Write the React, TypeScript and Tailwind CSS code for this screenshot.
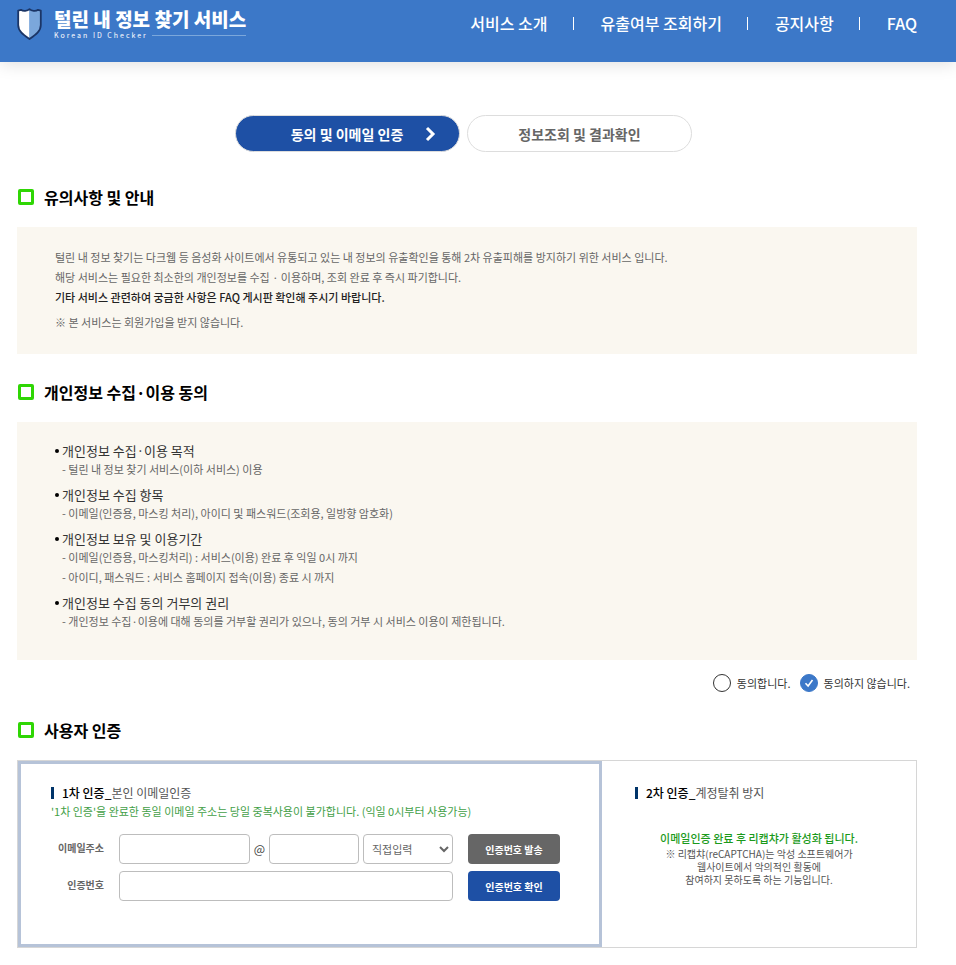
import { useState } from "react";
import type { ReactNode } from "react";

const NAV_ITEMS = ["서비스 소개", "유출여부 조회하기", "공지사항", "FAQ"];

const TERMS = [
  { title: "개인정보 수집·이용 목적", lines: ["- 털린 내 정보 찾기 서비스(이하 서비스) 이용"] },
  {
    title: "개인정보 수집 항목",
    lines: ["- 이메일(인증용, 마스킹 처리), 아이디 및 패스워드(조회용, 일방향 암호화)"],
  },
  {
    title: "개인정보 보유 및 이용기간",
    lines: [
      "- 이메일(인증용, 마스킹처리) : 서비스(이용) 완료 후 익일 0시 까지",
      "- 아이디, 패스워드 : 서비스 홈페이지 접속(이용) 종료 시 까지",
    ],
  },
  {
    title: "개인정보 수집 동의 거부의 권리",
    lines: [
      "- 개인정보 수집·이용에 대해 동의를 거부할 권리가 있으나, 동의 거부 시 서비스 이용이 제한됩니다.",
    ],
  },
];

const FIELD = "h-[30px] min-w-0 rounded border border-[#bdbdbd] bg-white text-[11px] text-[#666]";

function ShieldLogo() {
  return (
    <svg className="h-8 w-[25px] shrink-0" viewBox="0 0 25 32" aria-hidden="true">
      <path d="M12.500 1.500C10.500 3.200 6 3.400 4 1.800L1.200 3.600V17c0 6.500 5.500 10 11.300 14z" fill="#fff" />
      <path d="M12.500 1.500C14.500 3.200 19 3.400 21 1.800l2.800 1.800V17c0 6.500-5.500 10-11.300 14z" fill="#7ba7db" />
      <path
        d="M12.500 1.200C10.500 3.200 6 3.400 4 1.800L1.200 2.600V17c0 6.500 5.500 10 11.300 14 5.800-4 11.300-7.500 11.300-14V2.600L21 1.800C19 3.400 14.500 3.200 12.500 1.200z"
        fill="none"
        stroke="#1b3566"
        strokeWidth="1.800"
        strokeLinejoin="round"
      />
    </svg>
  );
}

function Header() {
  return (
    <header className="bg-[#3c78c8] shadow-[0_2px_16px_rgba(0,0,0,0.13)]">
      <div className="mx-auto flex h-[62px] max-w-[956px] items-start justify-between pl-[17px] pr-[39px]">
        <a href="#" className="flex gap-3 pt-2 text-white">
          <ShieldLogo />
          <span className="flex flex-col">
            <span className="whitespace-nowrap text-[19px] font-black leading-[22px]">
              털린 내 정보 찾기 서비스
            </span>
            <span className="flex items-center gap-1">
              <span className="text-[7px] leading-[10px] tracking-[2px]">Korean ID Checker</span>
              <span className="h-px flex-1 bg-[#7ba7db]" />
            </span>
          </span>
        </a>
        <nav className="pt-[11px]">
          <ul className="flex items-center">
            {NAV_ITEMS.map((item, i) => (
              <li key={item} className="flex items-center">
                {i > 0 && <span className="ml-[25px] mr-[27px] h-[13px] w-px bg-white" />}
                <a href="#" className="whitespace-nowrap text-base font-medium leading-6 text-white">
                  {item}
                </a>
              </li>
            ))}
          </ul>
        </nav>
      </div>
    </header>
  );
}

function SectionTitle({ children }: { children: ReactNode }) {
  return (
    <h2 className="flex items-center gap-[10px] text-base font-bold leading-6 text-black">
      <span className="ml-px size-4 rounded-[2px] border-[3px] border-[#2fd604]" />
      {children}
    </h2>
  );
}

function AgreeRadio(props: { label: string; checked: boolean; onSelect: () => void }) {
  return (
    <label className="flex items-center gap-[6px] text-[11px] leading-[18px] text-[#333]">
      <span className="relative flex">
        <input
          type="radio"
          name="agree"
          checked={props.checked}
          onChange={props.onSelect}
          className="size-[18px] appearance-none rounded-full border border-[#333] checked:border-[#3c78c8] checked:bg-[#3c78c8]"
        />
        {props.checked && (
          <svg className="pointer-events-none absolute inset-0 size-[18px]" viewBox="0 0 18 18" aria-hidden="true">
            <path d="M5.500 9.300l2.600 2.700 4.400-6" fill="none" stroke="#fff" strokeWidth="1.600" />
          </svg>
        )}
      </span>
      {props.label}
    </label>
  );
}

function PanelTitle({ step, name }: { step: string; name: string }) {
  return (
    <h3 className="flex items-center gap-2 text-[12px] leading-[18px] text-[#555]">
      <span className="h-3 w-[3px] bg-[#003469]" />
      <span>
        <span className="font-medium text-black">{step}_</span>
        {name}
      </span>
    </h3>
  );
}

export default function App() {
  const [agreed, setAgreed] = useState(false);
  return (
    <div className="min-h-screen bg-white font-['Noto_Sans_CJK_KR',sans-serif]">
      <Header />
      <main className="mx-auto max-w-[956px] pb-[17px] pl-[17px] pr-[39px] pt-[53px]">
        <div className="flex justify-center gap-[7px] pr-[7px]">
          <button className="flex h-[37px] w-[225px] items-center justify-center gap-[22px] rounded-full border border-[#ddd] bg-[#1e50a5] pl-[32px] text-sm font-bold text-white">
            동의 및 이메일 인증
            <svg className="h-4 w-[11px]" viewBox="0 0 11 16" aria-hidden="true">
              <path d="M2 2l6 6-6 6" fill="none" stroke="#fff" strokeWidth="3" />
            </svg>
          </button>
          <button className="h-[37px] w-[225px] rounded-full border border-[#ddd] bg-white text-sm font-bold text-[#666]">
            정보조회 및 결과확인
          </button>
        </div>

        <section className="mt-[33px]">
          <SectionTitle>유의사항 및 안내</SectionTitle>
          <div className="mt-[18px] bg-[#faf7f0] px-[38px] pb-[22px] pt-5 text-[11px] leading-5 text-[#666]">
            <p>
              털린 내 정보 찾기는 다크웹 등 음성화 사이트에서 유통되고 있는 내 정보의 유출확인을 통해 2차
              유출피해를 방지하기 위한 서비스 입니다.
            </p>
            <p>해당 서비스는 필요한 최소한의 개인정보를 수집 · 이용하며, 조회 완료 후 즉시 파기합니다.</p>
            <p className="font-medium text-[#222]">
              기타 서비스 관련하여 궁금한 사항은 FAQ 게시판 확인해 주시기 바랍니다.
            </p>
            <p className="mt-[5px]">※ 본 서비스는 회원가입을 받지 않습니다.</p>
          </div>
        </section>

        <section className="mt-[26px]">
          <SectionTitle>개인정보 수집·이용 동의</SectionTitle>
          <ul className="mt-[18px] flex flex-col gap-[7px] bg-[#faf7f0] px-[38px] pb-[30px] pt-[19px]">
            {TERMS.map((term) => (
              <li key={term.title} className="flex gap-[3px]">
                <span className="mt-2 size-1 shrink-0 rounded-full bg-black" />
                <div>
                  <h4 className="text-[13px] leading-5 text-[#333]">{term.title}</h4>
                  <div className="flex flex-col gap-[3px] text-[11px] leading-[17px] text-[#666]">
                    {term.lines.map((line) => (
                      <p key={line}>{line}</p>
                    ))}
                  </div>
                </div>
              </li>
            ))}
          </ul>
          <div className="mt-[14px] flex justify-end gap-[9px] pr-[7px]">
            <AgreeRadio label="동의합니다." checked={agreed} onSelect={() => setAgreed(true)} />
            <AgreeRadio label="동의하지 않습니다." checked={!agreed} onSelect={() => setAgreed(false)} />
          </div>
        </section>

        <section className="mt-[26px]">
          <SectionTitle>사용자 인증</SectionTitle>
          <div className="mt-[18px] grid grid-cols-[minmax(0,584fr)_minmax(0,314fr)] border border-[#d6d6d6]">
            <form
              className="border-[3px] border-[#b6c3d8] pb-[43px] pl-[30px] pr-[39px] pt-5"
              onSubmit={(e) => e.preventDefault()}
            >
              <PanelTitle step="1차 인증" name="본인 이메일인증" />
              <p className="whitespace-nowrap text-[11px] leading-[18px] text-[#43a047]">
                '1차 인증'을 완료한 동일 이메일 주소는 당일 중복사용이 불가합니다. (익일 0시부터 사용가능)
              </p>
              <div className="mt-[14px] flex gap-[15px]">
                <label
                  htmlFor="mail-id"
                  className="w-[53px] text-right text-[10px] font-bold leading-7 text-[#666]"
                >
                  이메일주소
                </label>
                <div className="flex min-w-0 flex-1 items-center gap-1">
                  <input id="mail-id" type="text" className={`${FIELD} flex-1 px-2`} />
                  <span className="text-[12px] leading-[18px] text-[#444]">@</span>
                  <input type="text" aria-label="이메일 도메인" className={`${FIELD} w-[90px] px-2`} />
                  <select aria-label="도메인 선택" className={`${FIELD} w-[90px] pl-1`}>
                    <option>직접입력</option>
                  </select>
                </div>
                <button className="h-[30px] w-[92px] rounded bg-[#666] text-[10px] font-bold text-white">
                  인증번호 발송
                </button>
              </div>
              <div className="mt-[7px] flex gap-[15px]">
                <label
                  htmlFor="code"
                  className="w-[53px] text-right text-[10px] font-bold leading-7 text-[#666]"
                >
                  인증번호
                </label>
                <input id="code" type="text" className={`${FIELD} flex-1 px-2`} />
                <button className="h-[30px] w-[92px] rounded bg-[#1e50a5] text-[10px] font-bold text-white">
                  인증번호 확인
                </button>
              </div>
            </form>
            <div className="px-[33px] pt-[23px]">
              <PanelTitle step="2차 인증" name="계정탈취 방지" />
              <div className="mt-[27px] text-center">
                <p className="whitespace-nowrap text-[11px] font-medium leading-[18px] text-[#1b9a1b]">
                  이메일인증 완료 후 리캡챠가 활성화 됩니다.
                </p>
                <p className="text-[10px] leading-[13px] text-[#555]">
                  ※ 리캡챠(reCAPTCHA)는 악성 소프트웨어가
                  <br />
                  웹사이트에서 악의적인 활동에
                  <br />
                  참여하지 못하도록 하는 기능입니다.
                </p>
              </div>
            </div>
          </div>
        </section>
      </main>
    </div>
  );
}
